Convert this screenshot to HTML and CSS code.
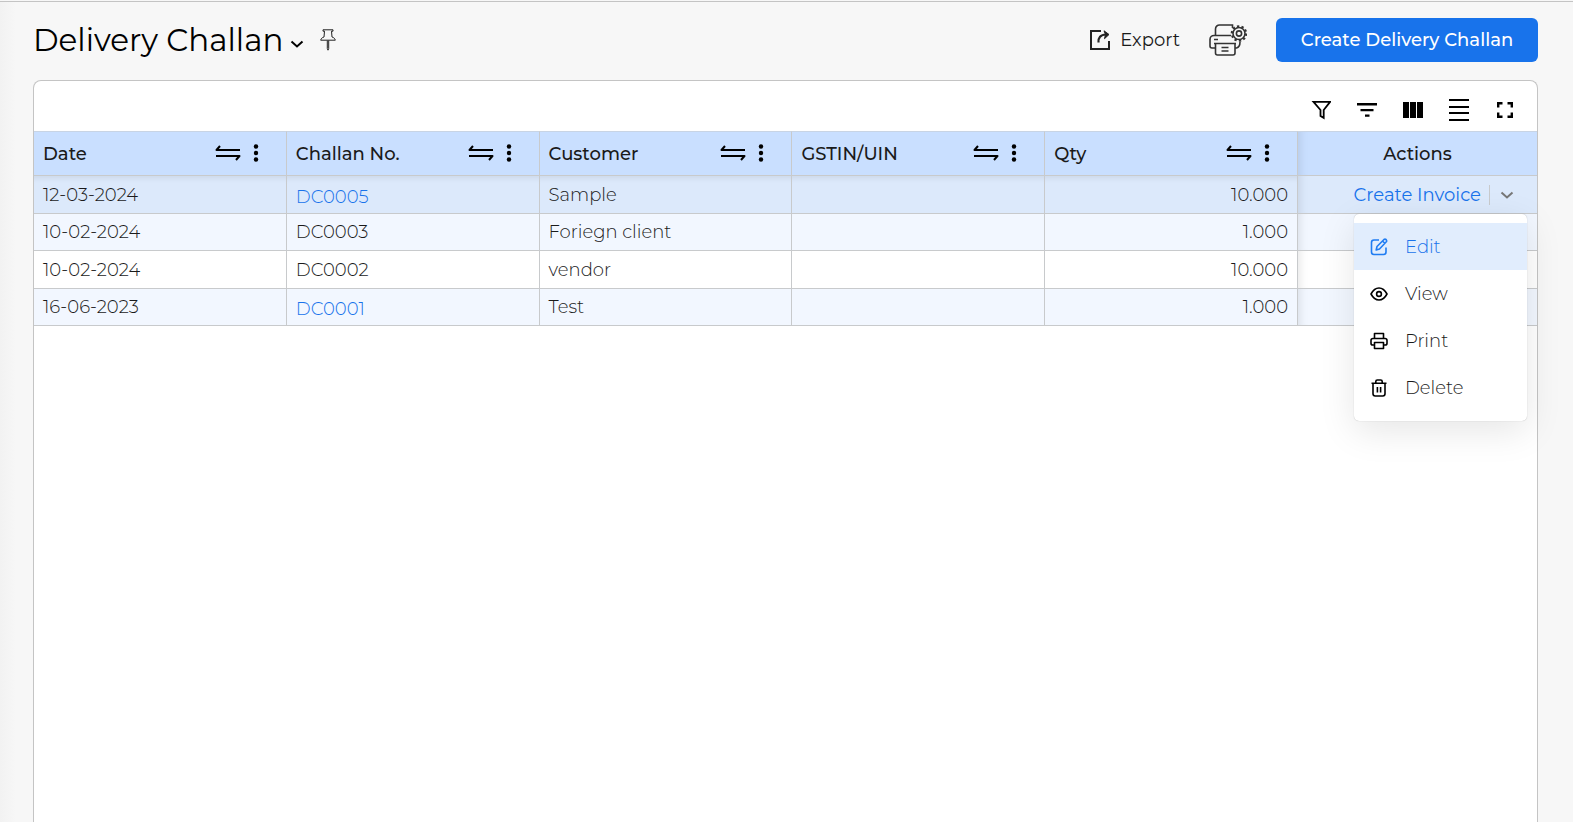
FILE: index.html
```
<!DOCTYPE html>
<html lang="en">
<head>
    <meta charset="UTF-8">
    <meta name="viewport" content="width=device-width, initial-scale=1.0">
    <title>Delivery Challan</title>
    <link rel="stylesheet" href="styles.css">
</head>
<body>

<!-- shared icons -->
<svg class="sprite" aria-hidden="true">
    <symbol id="swap" viewBox="0 0 26 18">
        <path d="M25 6H1.500L5 2M1 12h23.500L21 16" fill="none" stroke="currentColor" stroke-width="2" stroke-linejoin="round"/>
    </symbol>
    <symbol id="dots" viewBox="0 0 6 18">
        <circle cx="3" cy="2.500" r="2.200"/><circle cx="3" cy="9" r="2.200"/><circle cx="3" cy="15.500" r="2.200"/>
    </symbol>
    <symbol id="chevron" viewBox="0 0 14 8">
        <path d="M1.500 1.500L7 6.500l5.500-5" fill="none" stroke="currentColor" stroke-width="2"/>
    </symbol>
</svg>

<header class="page-header">
    <h1>Delivery Challan</h1>
    <button class="icon-btn title-arrow" aria-label="Change view"><svg width="14" height="8"><use href="#chevron"/></svg></button>
    <button class="icon-btn pin" aria-label="Pin">
        <svg width="16" height="22" viewBox="0 0 16 22" fill="none" stroke="#222" stroke-width="1"><path d="M3 .8h10v1.400h-1.500L12 8c2 .5 3 1.800 3.300 3.200H.7C1 9.800 2 8.500 4 8l.5-5.800H3zM7.300 11.500v8l.7 1.700.7-1.700v-8"/></svg>
    </button>
    <div class="header-actions">
        <button class="export-btn">
            <svg width="20" height="20" viewBox="0 0 20 20" fill="none" stroke="#222" stroke-width="2"><path d="M11 1H1v18h18v-8"/><path d="M8.500 12.500C8 8 10.500 4.500 16 4.500" stroke-width="2.200"/><path d="M14 .8l5 3.700-4.500 4.200 1-4.200z" fill="#222" stroke-width="1"/></svg>
            Export
        </button>
        <button class="icon-btn" aria-label="Print settings">
            <svg width="38" height="32" viewBox="0 0 38 32" fill="none" stroke="#333" stroke-width="1.600">
                <path d="M6.500 11.500V5a4 4 0 0 1 4-4h13v3"/>
                <path d="M22 11.500H5a4 4 0 0 0-4 4V22q0 2 2 2h3.500M26 24h1.500q3.500-1 3.500-6"/>
                <path d="M5 15.500h4M5 19.500h22" />
                <path d="M6.500 19.500V29q0 2 2 2H24q2 0 2-2v-9.500M12.500 23.500h7M12.500 27h7"/>
                <circle cx="30" cy="9.500" r="2.600"/>
                <circle cx="30" cy="9.500" r="6"/>
                <circle cx="30" cy="9.500" r="7.200" stroke-width="2.200" stroke-dasharray="2.300 2.224"/>
            </svg>
        </button>
        <button class="create-btn">Create Delivery Challan</button>
    </div>
</header>

<main class="panel">
    <div class="toolbar">
        <button class="icon-btn" aria-label="Filter"><svg width="20" height="20" viewBox="0 0 20 20" fill="none" stroke="#000" stroke-width="1.800"><path d="M2.500 1.900h16.600L12.700 10v7.800l-3.200-1.900V10z"/></svg></button>
        <button class="icon-btn" aria-label="Sort"><svg width="20" height="20" viewBox="0 0 20 20"><path d="M0 3h20v2.400H0zM3.500 9h13v2.200h-13zM8 14.600h4.500v2.200H8z"/></svg></button>
        <button class="icon-btn" aria-label="Columns"><svg width="20" height="20" viewBox="0 0 20 20"><path d="M0 2h6v16H0zM7 2h6v16H7zM14 2h6v16h-6z"/></svg></button>
        <button class="icon-btn" aria-label="Row height"><svg width="20" height="24" viewBox="0 0 20 24"><path d="M0 1h20v2H0zM0 8h20v2H0zM0 14h20v2H0zM0 21h20v2H0z"/></svg></button>
        <button class="icon-btn" aria-label="Full screen"><svg width="20" height="20" viewBox="0 0 20 20" fill="none" stroke="#000" stroke-width="2.400"><path d="M3.200 7.500V3.200h4.300M12.500 3.200h4.300v4.300M16.800 12.500v4.300h-4.300M7.500 16.800H3.200v-4.300"/></svg></button>
    </div>

    <table>
        <thead>
            <tr>
                <th><div class="head-cell"><span>Date</span><button class="icon-btn" aria-label="Sort date"><svg width="26" height="18"><use href="#swap"/></svg></button><button class="icon-btn" aria-label="Date menu"><svg width="6" height="18"><use href="#dots"/></svg></button></div></th>
                <th><div class="head-cell"><span>Challan No.</span><button class="icon-btn" aria-label="Sort challan no."><svg width="26" height="18"><use href="#swap"/></svg></button><button class="icon-btn" aria-label="Challan no. menu"><svg width="6" height="18"><use href="#dots"/></svg></button></div></th>
                <th><div class="head-cell"><span>Customer</span><button class="icon-btn" aria-label="Sort customer"><svg width="26" height="18"><use href="#swap"/></svg></button><button class="icon-btn" aria-label="Customer menu"><svg width="6" height="18"><use href="#dots"/></svg></button></div></th>
                <th><div class="head-cell"><span>GSTIN/UIN</span><button class="icon-btn" aria-label="Sort GSTIN"><svg width="26" height="18"><use href="#swap"/></svg></button><button class="icon-btn" aria-label="GSTIN menu"><svg width="6" height="18"><use href="#dots"/></svg></button></div></th>
                <th><div class="head-cell"><span>Qty</span><button class="icon-btn" aria-label="Sort qty"><svg width="26" height="18"><use href="#swap"/></svg></button><button class="icon-btn" aria-label="Qty menu"><svg width="6" height="18"><use href="#dots"/></svg></button></div></th>
                <th class="actions">Actions</th>
            </tr>
        </thead>
        <tbody>
            <tr class="active">
                <td>12-03-2024</td>
                <td><a href="#">DC0005</a></td>
                <td>Sample</td>
                <td></td>
                <td class="qty">10.000</td>
                <td class="actions">
                    <div class="row-actions">
                        <a href="#">Create Invoice</a>
                        <button class="icon-btn more" aria-label="More actions"><svg width="14" height="8"><use href="#chevron"/></svg></button>
                    </div>
                    <div class="menu">
                        <button class="menu-item selected">
                            <svg width="18" height="18" viewBox="0 0 18 18"><path d="M9 2H4Q1.500 2 1.500 4.500v9.500Q1.500 16.500 4 16.500h9.500Q16 16.500 16 14V9.500"/><path d="M6.200 12l.8-3.500 7-7q1-.7 2 0l.3.400q.7 1 0 1.900L9.500 11zM12.500 3l2.300 2.300"/></svg>
                            Edit
                        </button>
                        <button class="menu-item">
                            <svg width="18" height="18" viewBox="0 0 18 18"><path d="M1 9q3.200-6 8-6t8 6q-3.200 6-8 6T1 9z"/><circle cx="9" cy="9" r="2.400"/></svg>
                            View
                        </button>
                        <button class="menu-item">
                            <svg width="18" height="18" viewBox="0 0 18 18"><path d="M4.500 6.500V1.500h9v5M4.500 13H2.800Q1 13 1 11.200V8.500q0-2 2-2h12q2 0 2 2v2.700Q17 13 15.200 13h-1.700"/><path d="M4.500 10.500h9v6h-9z"/></svg>
                            Print
                        </button>
                        <button class="menu-item">
                            <svg width="18" height="18" viewBox="0 0 18 18"><path d="M1.500 4.300h15M5.800 4V2.500q0-1.500 1.500-1.500h3.400q1.500 0 1.500 1.500V4M3 4.500v10.300q0 2.200 2.200 2.200h7.600q2.200 0 2.200-2.200V4.500M7.400 8v5.500M10.600 8v5.500"/></svg>
                            Delete
                        </button>
                    </div>
                </td>
            </tr>
            <tr>
                <td>10-02-2024</td>
                <td>DC0003</td>
                <td>Foriegn client</td>
                <td></td>
                <td class="qty">1.000</td>
                <td class="actions"></td>
            </tr>
            <tr>
                <td>10-02-2024</td>
                <td>DC0002</td>
                <td>vendor</td>
                <td></td>
                <td class="qty">10.000</td>
                <td class="actions"></td>
            </tr>
            <tr>
                <td>16-06-2023</td>
                <td><a href="#">DC0001</a></td>
                <td>Test</td>
                <td></td>
                <td class="qty">1.000</td>
                <td class="actions"></td>
            </tr>
        </tbody>
    </table>
</main>

</body>
</html>
```
FILE: styles.css
```
* {
    margin: 0;
    padding: 0;
    box-sizing: border-box;
}
body {
    display: flex;
    flex-direction: column;
    min-height: 100vh;
    padding: 0 35px 0 33px;
    font-family: Montserrat, Inter, sans-serif;
    font-size: 18px;
    font-weight: 300;
    line-height: 24px;
    color: #1a1a1a;
    background: linear-gradient(to right, #f2f2f2, #f7f7f7 16px);
    box-shadow: inset 0 1px #f7f7f7, inset 0 2px #c4c4c4;
}
button {
    font: inherit;
    color: inherit;
    background: none;
    border: none;
    cursor: pointer;
}
a {
    color: #1873eb;
    text-decoration: none;
}
svg {
    display: block;
}
.sprite {
    position: absolute;
    width: 0;
    height: 0;
}
.icon-btn {
    flex: none;
    color: #000;
}
.page-header {
    display: flex;
    align-items: center;
    height: 80px;
}
h1 {
    font-size: 31px;
    line-height: 40px;
    font-weight: 400;
    color: #000;
}
.title-arrow {
    margin: 8px 16px 0 7px;
}
.header-actions {
    display: flex;
    align-items: center;
    gap: 29px;
    margin-left: auto;
}
.export-btn {
    display: flex;
    align-items: center;
    gap: 10px;
    font-weight: 400;
}
.create-btn {
    min-width: 262px;
    height: 44px;
    font-weight: 500;
    color: #fff;
    background-color: #1873eb;
    border-radius: 6px;
}
.panel {
    flex: 1;
    background-color: #fff;
    border: 1px solid #c4c4c4;
    border-bottom: none;
    border-radius: 8px 8px 0 0;
}
.toolbar {
    display: flex;
    justify-content: flex-end;
    align-items: center;
    gap: 26px;
    height: 50px;
    padding: 8px 22px 0 0;
}
table {
    width: 100%;
    table-layout: fixed;
    border-collapse: separate;
    border-spacing: 0;
}
th, td {
    text-align: left;
    vertical-align: middle;
    padding: 0 9px;
    border-right: 1px solid #c8cacc;
    border-bottom: 1px solid #c8cacc;
}
th:last-child, td:last-child {
    border-right: none;
}
th {
    height: 45px;
    font-weight: 500;
    background-color: #c9dfff;
    border-top: 1px solid #c8d4e4;
}
.head-cell {
    display: flex;
    align-items: center;
    gap: 12px;
    padding-right: 18px;
}
.head-cell span {
    flex: 1;
}
.head-cell .icon-btn {
    padding-bottom: 2px;
}
td {
    height: 37px;
}
tr:nth-child(odd) td {
    height: 38px;
}
tr:nth-child(even) td {
    background-color: #f2f7ff;
}
tr.active td {
    background-color: #dce9fb;
    box-shadow: inset 0 8px 6px -6px rgba(0, 0, 0, 0.08);
}
td > a {
    display: block;
    padding-top: 4px;
}
.qty {
    text-align: right;
}
.actions, tr.active td.actions {
    position: relative;
    width: 239px;
    box-shadow: inset 10px 0 8px -8px rgba(0, 0, 0, 0.1);
}
th.actions {
    text-align: center;
}
.row-actions {
    display: flex;
    justify-content: flex-end;
    align-items: center;
    font-weight: 400;
}
.more {
    height: 20px;
    margin-left: 8px;
    padding: 0 14px 0 10px;
    border-left: 1px solid #c8cacc;
    color: #777;
}
.menu {
    position: absolute;
    top: 100%;
    right: 10px;
    z-index: 10;
    width: 173px;
    margin-top: 1px;
    padding: 9px 0 10px;
    background-color: #fff;
    border-radius: 5px;
    box-shadow: 0 0 1px rgba(0, 0, 0, 0.3), 0 10px 36px rgba(0, 0, 0, 0.1);
}
.menu-item {
    display: flex;
    align-items: center;
    gap: 17px;
    width: 100%;
    height: 47px;
    padding-left: 16px;
}
.menu-item svg {
    fill: none;
    stroke: #000;
    stroke-width: 1.6px;
    stroke-linejoin: round;
}
.menu-item.selected {
    color: #1873eb;
    background-color: #e1edfd;
}
.menu-item.selected svg {
    stroke: #1f7cf2;
}
```
